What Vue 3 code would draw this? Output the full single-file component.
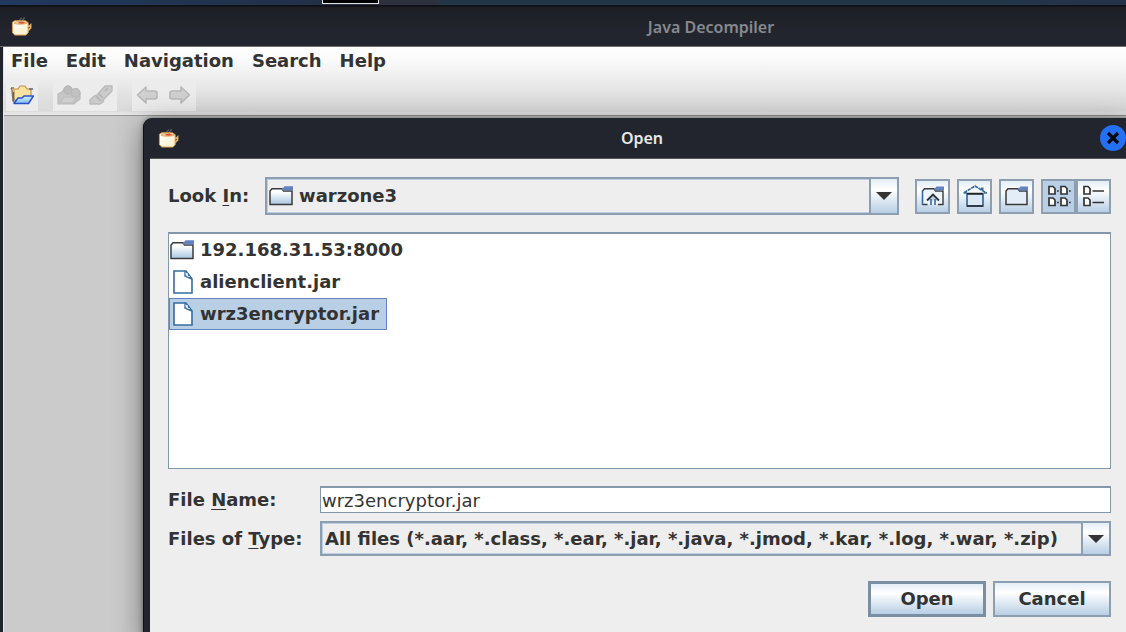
<script setup>
import { ref } from 'vue'

const menus = ['File', 'Edit', 'Navigation', 'Search', 'Help']
const files = [
  { name: '192.168.31.53:8000', kind: 'folder' },
  { name: 'alienclient.jar', kind: 'file' },
  { name: 'wrz3encryptor.jar', kind: 'file' },
]
const selected = ref('wrz3encryptor.jar')
const fileName = ref('wrz3encryptor.jar')

function pick(file) {
  selected.value = file.name
  fileName.value = file.name
}
</script>

<template>
  <div class="desktop">
    <svg class="defs" width="0" height="0" aria-hidden="true">
      <defs>
        <linearGradient id="folderFill" x1="0" y1="0" x2="0" y2="1">
          <stop offset="0.2" stop-color="#fff" />
          <stop offset="1" stop-color="#a9c6e3" />
        </linearGradient>
        <linearGradient id="cupFill" x1="0" y1="0" x2="1" y2="1">
          <stop offset="0" stop-color="#fff" />
          <stop offset="1" stop-color="#fbeec4" />
        </linearGradient>
        <linearGradient id="openFill" x1="0" y1="0" x2="0" y2="1">
          <stop offset="0" stop-color="#d3eeff" />
          <stop offset="1" stop-color="#7dbcf4" />
        </linearGradient>
        <symbol id="cup" viewBox="0 0 22 22">
          <path d="M9 6C8 3 11 4 11 1.500M12 6C11 3 14 4 14 1" fill="none" stroke="#5d6066" stroke-width="1.300" />
          <path d="M17 10.500h2.500l1-1v3l-3 3" fill="none" stroke="#e9b468" stroke-width="1.800" />
          <path d="M1.500 6.500 4 5h11l3 2v10.500L15.500 20H4l-2.500-2.500z" fill="url(#cupFill)" stroke="#d99a45" stroke-width="1" />
          <path d="M3 7.500C5 5 14 5 17 7.500 14 9 5 9 3 7.500z" fill="#f6cf9e" stroke="#cf9450" stroke-width=".7" />
          <path d="M7 7.300C9 5.600 13 5.600 15 7.300 13 8.300 9 8.300 7 7.300z" fill="#dc5430" />
        </symbol>
        <symbol id="folder" viewBox="0 0 24 20">
          <path d="M1 18.500V5l2-2.200h10L14.500 5H23v13.500z" fill="url(#folderFill)" stroke="#3b3b3b" stroke-width="1.500" />
          <path d="M13 3.600 15.500.200H24v4.300H13z" fill="#6382bf" />
        </symbol>
        <symbol id="file" viewBox="0 0 20 24">
          <path d="M1 1h12l6 8v14H1z" fill="#fff" stroke="#356c9f" stroke-width="1.600" />
          <path d="M12 1v5l7 3M14 3l4 5" fill="none" stroke="#356c9f" stroke-width="1.400" />
          <path d="M12.500 3.500h2v3h2.500" fill="none" stroke="#cfe0f2" stroke-width="1" />
        </symbol>
      </defs>
    </svg>

    <div class="panel"><span class="thumb"></span></div>

    <section class="window" aria-label="Java Decompiler">
      <header class="titlebar">
        <svg class="cup"><use href="#cup" /></svg>
        <h1>Java Decompiler</h1>
      </header>
      <div class="client">
        <div class="bars">
          <nav class="menubar">
            <button v-for="menu in menus" :key="menu" type="button">{{ menu }}</button>
          </nav>
          <div class="toolbar">
            <div class="group">
              <button type="button" aria-label="Open file">
                <svg viewBox="0 0 24 20">
                  <path d="M1 3h3M1 3l1 2 1 11 2 2" fill="none" stroke="#8d744f" stroke-width="1.400" />
                  <path d="M4 4h4l2-3h5l2 3h4v7L18 15H4z" fill="#fbe3a0" stroke="#c6914a" stroke-width="1.200" />
                  <path d="M19 4h4M3.500 16V7" stroke="#59688c" stroke-width="1.400" />
                  <path d="M4 18.500 8 13h4l2-2h9.500l-5 7.500z" fill="url(#openFill)" stroke="#2c50cc" stroke-width="1.500" stroke-linejoin="round" />
                </svg>
              </button>
            </div>
            <div class="group">
              <button type="button" aria-label="Open type" disabled>
                <svg viewBox="0 0 24 20">
                  <path d="M1 19V9l4-2 3-4h5l3 2 5-1 2 4v6l-4 3-2 2z" fill="#c6c6c6" stroke="#bababa" stroke-width="1.200" stroke-linejoin="round" />
                  <circle cx="11" cy="5" r="4.200" fill="#bcbcbc" stroke="#b5b5b5" />
                  <circle cx="18.500" cy="8" r="4.500" fill="#c1c1c1" stroke="#b7b7b7" />
                  <path d="M3 18 7 12h12l-3 6z" fill="#cecece" stroke="#bababa" />
                </svg>
              </button>
              <button type="button" aria-label="Search" disabled>
                <svg viewBox="0 0 24 20">
                  <path d="M1 19v-4l4-4 3-1 8-9h7v5l-8 8-1 3-3 2z" fill="#cbcbcb" stroke="#bababa" stroke-width="1.300" stroke-linejoin="round" />
                  <path d="m7 11 5 5M10 9l4 4M16 6l3-3" stroke="#b2b2b2" stroke-width="1.500" />
                </svg>
              </button>
            </div>
            <div class="group">
              <button type="button" aria-label="Back" disabled>
                <svg viewBox="0 0 24 20">
                  <path d="M1.500 10 10 2v4h9l2 1v6l-2 1h-9v4z" fill="#d0d0d0" stroke="#b8b8b8" stroke-width="1.600" stroke-linejoin="round" />
                </svg>
              </button>
              <button type="button" aria-label="Forward" disabled>
                <svg viewBox="0 0 24 20">
                  <path d="M21.500 10 13 2v4H4L2 7v6l2 1h9v4z" fill="#d0d0d0" stroke="#b8b8b8" stroke-width="1.600" stroke-linejoin="round" />
                </svg>
              </button>
            </div>
          </div>
        </div>
      </div>
    </section>

    <section class="dialog" role="dialog" aria-labelledby="dialog-title">
      <header class="dialog-title">
        <svg class="cup"><use href="#cup" /></svg>
        <h2 id="dialog-title">Open</h2>
        <button class="close" type="button" aria-label="Close">
          <svg viewBox="0 0 26 26">
            <circle cx="13" cy="13" r="13" fill="#2470f4" />
            <path d="m8 8 10 10M18 8 8 18" stroke="#05070c" stroke-width="3.200" />
          </svg>
        </button>
      </header>

      <form class="chooser" @submit.prevent>
        <div class="look-row">
          <label for="look-in">Look <u>I</u>n:</label>
          <div class="combo look-combo">
            <svg class="folder-icon"><use href="#folder" /></svg>
            <select id="look-in"><option>warzone3</option></select>
            <span class="arrow"></span>
          </div>
          <div class="tools">
            <button type="button" class="tool" aria-label="Up one level">
              <svg viewBox="0 0 24 22">
                <path d="M1.500 19.500V6l2-2.200H13L14.500 6H22v13.500z" fill="#edf4fb" />
                <path d="M1.500 6l2-2.200H13L14.500 6H22v13.500h-5M1.500 19.500h5" fill="none" stroke="#3b3b3b" stroke-width="1.400" />
                <path d="M1.500 20V5.500" stroke="#356c9f" stroke-width="1.600" />
                <path d="M13 4.600 15.500 1.500H23v4H13z" fill="#6382bf" />
                <path d="m6 15.500 6-6 6 6" fill="#b8cfe5" stroke="#333" stroke-width="1.800" />
                <path d="M10 14v6M14 14v6" stroke="#356c9f" stroke-width="1.600" />
              </svg>
            </button>
            <button type="button" class="tool" aria-label="Home">
              <svg viewBox="0 0 24 22">
                <path d="M4 9h16v12H4z" fill="#dce8f4" stroke="#356c9f" stroke-width="1.700" />
                <path d="M1 8 12 1l11 7z" fill="#fff" />
                <path d="M4 8H.500L12 1l11.500 7H20" fill="none" stroke="#356c9f" stroke-width="1.700" stroke-dasharray="3.500 .7" />
                <path d="M18 2.500h2.500v4L18 5z" fill="#356c9f" />
                <path d="M4 8.700h16M4 21h16" stroke="#222" stroke-width="1.700" />
              </svg>
            </button>
            <button type="button" class="tool" aria-label="Create new folder">
              <svg viewBox="0 0 24 22">
                <path d="M1 19.500V6l2-2.200h10L14.500 6H22v13.500z" fill="#e3edf7" stroke="#3b3b3b" stroke-width="1.500" />
                <path d="M13 4.600 15.500 1.500H23v4H13z" fill="#6382bf" />
              </svg>
            </button>
            <div class="views">
              <button type="button" class="tool pressed" aria-label="List view" aria-pressed="true">
                <svg viewBox="0 0 24 22">
                  <g fill="#fff" stroke="#333" stroke-width="1.700">
                    <path d="M2 1.500h4l2 2v5.500H2zM14 1.500h4l2 2v5.500h-6zM2 13h4l2 2v5.500H2zM14 13h4l2 2v5.500h-6z" />
                  </g>
                  <path d="M10 6h1.800M22 6h1.800M10 17.500h1.800M22 17.500h1.800" stroke="#333" stroke-width="1.700" />
                </svg>
              </button>
              <button type="button" class="tool" aria-label="Details view" aria-pressed="false">
                <svg viewBox="0 0 24 22">
                  <g fill="#fff" stroke="#333" stroke-width="1.700">
                    <path d="M2 1.500h4l2 2v5.500H2zM2 13h4l2 2v5.500H2z" />
                    <path d="M10.500 6H22M10.500 17.500H22" />
                  </g>
                </svg>
              </button>
            </div>
          </div>
        </div>

        <ul class="files">
          <li v-for="file in files" :key="file.name">
            <button
              type="button"
              :class="['entry', { selected: selected === file.name }]"
              @click="pick(file)"
            >
              <svg :class="file.kind + '-icon'"><use :href="'#' + file.kind" /></svg>
              <span>{{ file.name }}</span>
            </button>
          </li>
        </ul>

        <div class="fields">
          <label for="file-name">File <u>N</u>ame:</label>
          <input id="file-name" v-model="fileName" type="text" />
          <label for="file-type">Files of <u>T</u>ype:</label>
          <div class="combo type-combo">
            <select id="file-type">
              <option>All files (*.aar, *.class, *.ear, *.jar, *.java, *.jmod, *.kar, *.log, *.war, *.zip)</option>
            </select>
            <span class="arrow"></span>
          </div>
        </div>

        <div class="actions">
          <button type="submit" class="default">Open</button>
          <button type="button">Cancel</button>
        </div>
      </form>
    </section>
  </div>
</template>

<style>
html,
body {
  background: #cbcbcb;
}
</style>

<style scoped>
* {
  box-sizing: border-box;
}
.desktop {
  position: relative;
  display: flex;
  flex-direction: column;
  min-height: 100vh;
  overflow: hidden;
  color: #333;
  font: bold 18px/22px "DejaVu Sans", sans-serif;
}
.defs {
  position: absolute;
}
button,
input,
select {
  margin: 0;
  padding: 0;
  border: 0;
  border-radius: 0;
  background: none;
  color: inherit;
  font: inherit;
}
svg {
  display: block;
  flex: none;
}

.panel {
  height: 5px;
  padding-left: 322px;
  background: linear-gradient(90deg, #20395e, #223047 320px, #2f303d 380px, #2f303d 438px, #233648 439px, #233648 1000px, #25324a);
}
.thumb {
  display: block;
  width: 57px;
  height: 4px;
  border: 1px solid #e4e4e4;
  border-top: 0;
  background: #000;
}

.window {
  display: flex;
  flex: 1;
  flex-direction: column;
  width: calc(100% + 296px);
  padding-left: 3px;
  background: #22242d;
}
.titlebar {
  display: flex;
  align-items: center;
  height: 42px;
  margin-left: -3px;
  padding-left: 11px;
  border-top: 2px solid #111318;
  border-bottom: 1px solid #6d6e74;
  background: linear-gradient(#1c1e24, #23252e 60%);
}
.cup {
  width: 21px;
  height: 21px;
}
h1,
h2 {
  flex: 1;
  margin: 0;
  font: 600 16px/24px "Noto Sans", "Open Sans", sans-serif;
  text-align: center;
}
h1 {
  margin-right: 32px;
  color: #868a90;
}
.client {
  flex: 1;
  border-left: 1px solid #e4e4e4;
  background: #cbcbcb;
}
.bars {
  height: 69px;
  border-bottom: 1px solid #999;
  background: linear-gradient(#fff, #fbfbfb 12px, #e0e0e0 50px, #dadada 64px, #e6e6e6 66px);
}
.menubar {
  display: flex;
  gap: 18px;
  padding: 3px 7px 7px;
}
.toolbar {
  display: flex;
  gap: 15px;
  padding-left: 2px;
}
.group {
  display: flex;
  background: #ececec;
}
.group button {
  display: grid;
  place-items: center;
  width: 32px;
  height: 32px;
}
.group svg {
  width: 24px;
  height: 20px;
}

.dialog {
  position: absolute;
  top: 118px;
  right: -9px;
  bottom: -9px;
  left: 143px;
  padding: 0 6px;
  border-left: 1px solid #0d0f14;
  border-radius: 9px 9px 0 0;
  background: #22252e;
  box-shadow: 0 0 5px rgba(0, 0, 0, 0.4), 0 7px 30px rgba(0, 0, 0, 0.45);
}
.dialog-title {
  display: flex;
  align-items: center;
  height: 41px;
  padding: 0 3px 0 8px;
  border-bottom: 1px solid #55575e;
}
h2 {
  padding-left: 5px;
  color: #e8e8e8;
}
.close {
  width: 26px;
  height: 26px;
}
.chooser {
  display: flex;
  flex-direction: column;
  min-height: 100%;
  padding: 18px 18px 0;
  background: #eee;
}
.look-row {
  display: flex;
  align-items: center;
}
.look-row label {
  width: 97px;
}
u {
  text-decoration-thickness: 1px;
  text-underline-offset: 3px;
}
.combo {
  position: relative;
  display: flex;
  flex: 1;
  min-width: 0;
  border: 2px solid #8c9eaf;
  background: #eee;
}
.combo select {
  flex: 1;
  min-width: 0;
  width: 100%;
  appearance: none;
  outline: 0;
  border: 1px solid #b8cfe5;
  padding-right: 28px;
}
.look-combo {
  height: 38px;
}
.look-combo select {
  padding-left: 31px;
}
.look-combo .folder-icon {
  position: absolute;
  top: 7px;
  left: 2px;
}
.folder-icon {
  width: 24px;
  height: 20px;
}
.arrow {
  position: absolute;
  top: 0;
  right: 0;
  bottom: 0;
  display: grid;
  place-items: center;
  width: 28px;
  border-left: 2px solid #8c9eaf;
  background: linear-gradient(#e3edf6, #fff 30%, #b8cfe5);
  pointer-events: none;
}
.arrow::after {
  content: "";
  border: 8px solid transparent;
  border-top-color: #333;
  border-bottom: 0;
}
.tools {
  display: flex;
  gap: 7px;
  margin-left: 16px;
}
.tool {
  display: grid;
  place-items: center;
  width: 35px;
  height: 35px;
  border: 2px solid #8c9eaf;
  background: linear-gradient(#e3edf6, #fff 30%, #b8cfe5);
}
.tool svg {
  width: 24px;
  height: 22px;
}
.views {
  display: flex;
}
.pressed {
  background: #b8cfe5;
}

.files {
  height: 237px;
  margin: 17px 0;
  padding: 0;
  border: 1px solid #8297aa;
  border-top-width: 2px;
  background: #fff;
  list-style: none;
}
.entry {
  display: flex;
  align-items: center;
  gap: 6px;
  height: 32px;
  padding: 0 7px 0 0;
  border: 1px solid transparent;
}
.selected {
  border-color: #6382bf;
  background: #b8cfe5;
}
.file-icon {
  width: 20px;
  height: 24px;
  margin: 0 1px 0 3px;
}

.fields {
  display: grid;
  grid-template-columns: 152px 1fr;
  gap: 8px 0;
  align-items: center;
}
.fields input {
  width: 100%;
  height: 27px;
  padding-left: 1px;
  border: 1px solid #8297aa;
  border-top-width: 2px;
  outline: 0;
  background: #fff;
  font-weight: normal;
}
.type-combo {
  height: 35px;
}
.type-combo select {
  padding-left: 2px;
}
.actions {
  display: flex;
  justify-content: flex-end;
  gap: 7px;
  margin-top: 25px;
}
.actions button {
  width: 118px;
  height: 36px;
  border: 2px solid #8c9eaf;
  background: linear-gradient(#e3edf6, #fff 30%, #b8cfe5);
}
.actions .default {
  border-width: 3px;
  border-color: #7b8fa3;
}
</style>
